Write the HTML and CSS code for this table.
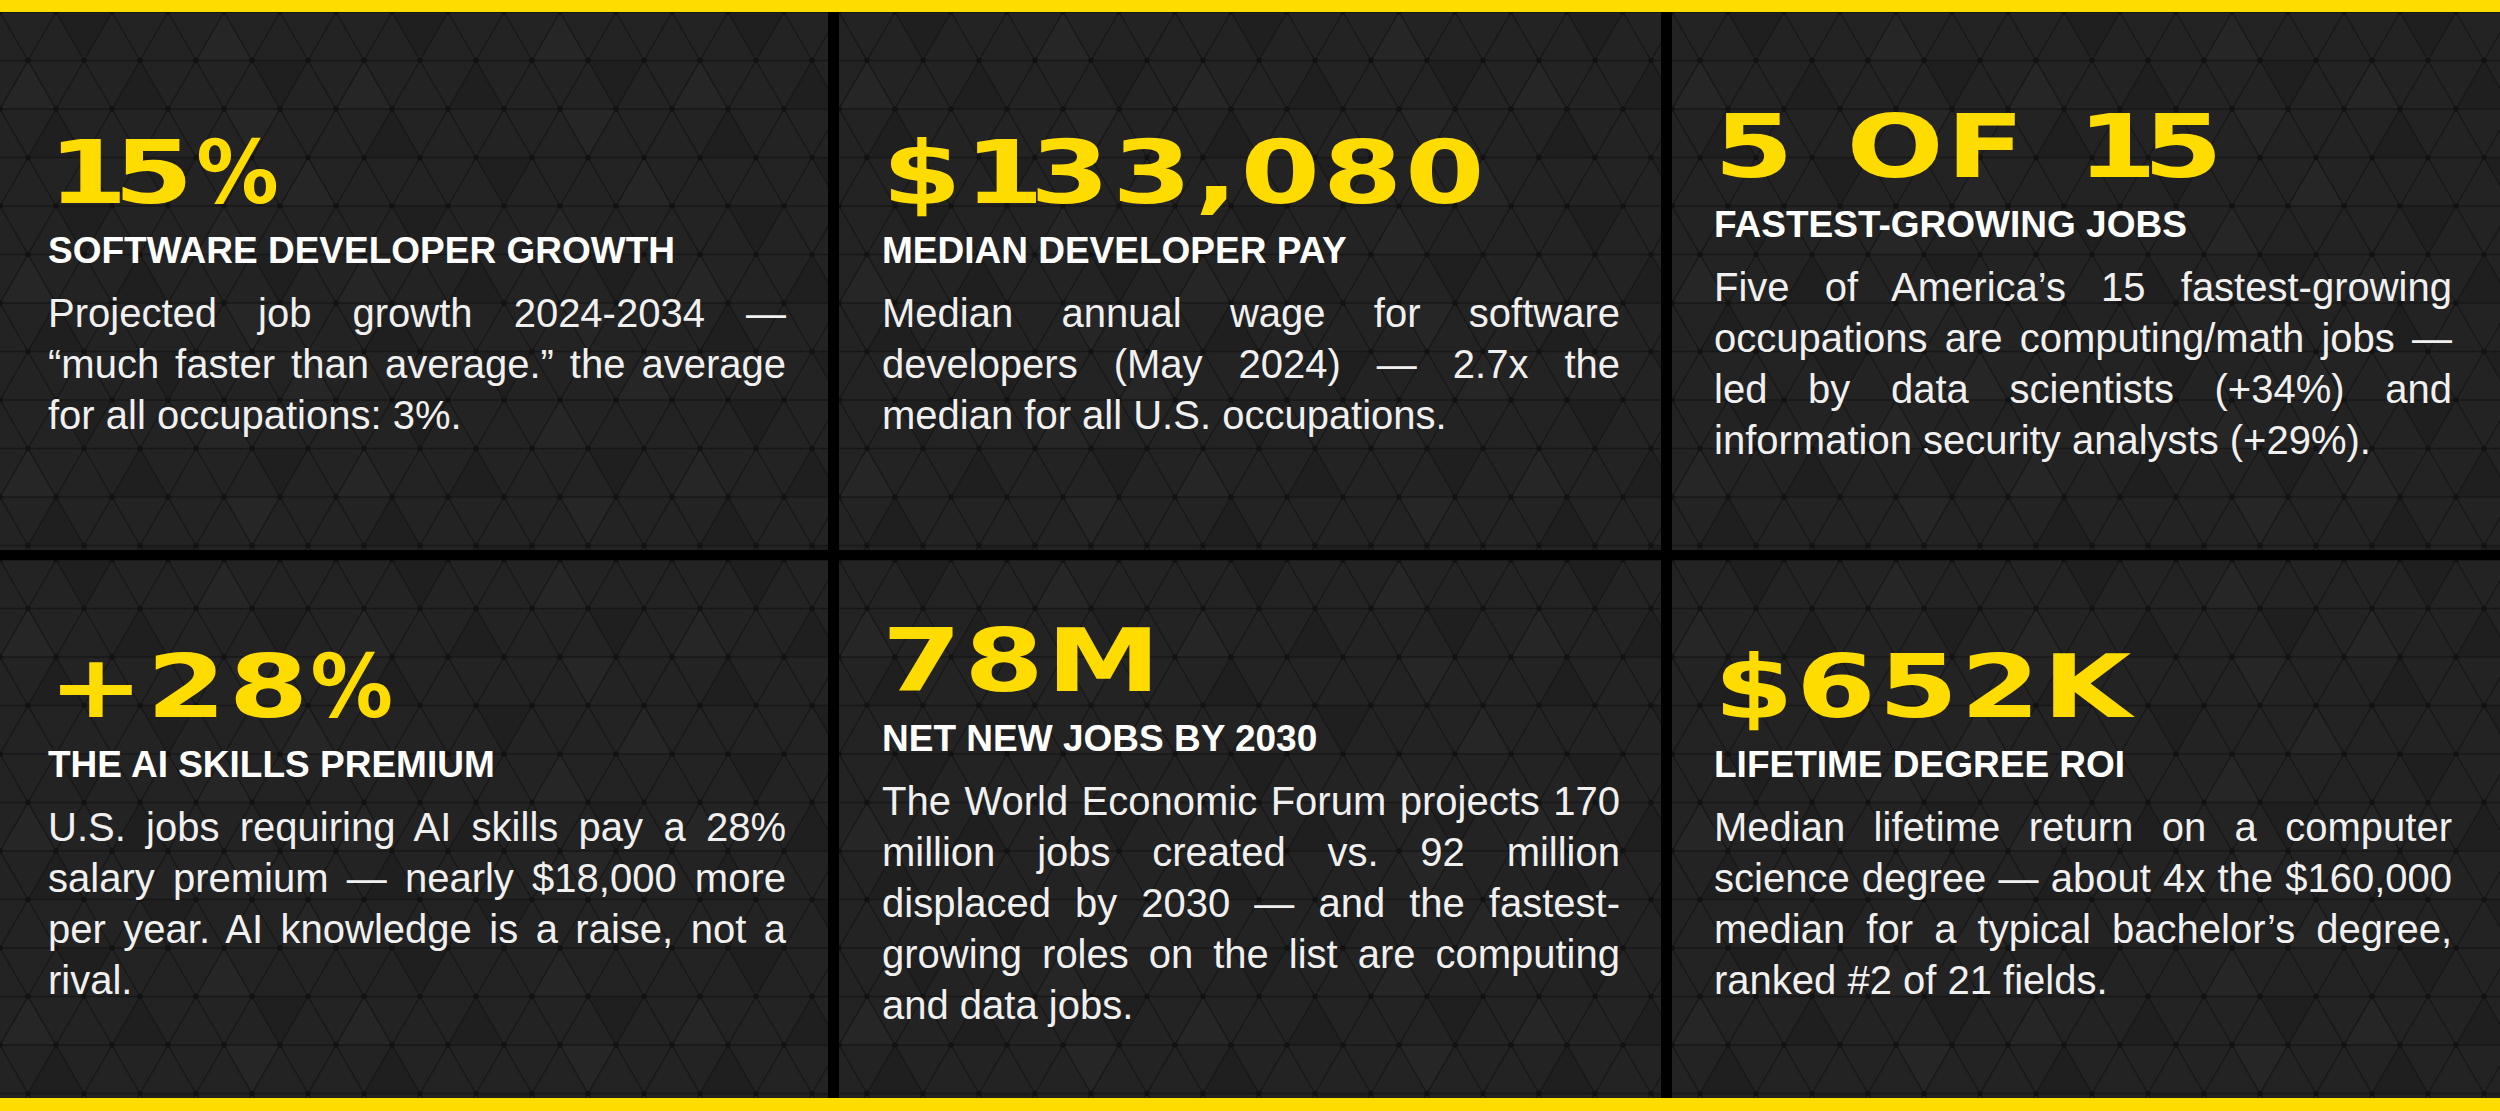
FILE: index.html
```html
<!DOCTYPE html>
<html lang="en">
<head>
<meta charset="utf-8">
<title>Computing Careers by the Numbers</title>
<link rel="stylesheet" href="styles.css">
</head>
<body>
<main class="board">
  <section class="cell c1 r1">
    <div class="num"><span class="one">1</span>5<span class="pct">%</span></div>
    <h2 class="title">SOFTWARE DEVELOPER GROWTH</h2>
    <p class="desc"><span class="ln">Projected job growth 2024-2034 —</span><span class="ln">“much faster than average.” the average</span><span class="ln">for all occupations: 3%.</span></p>
  </section>
  <section class="cell c2 r1">
    <div class="num">$<span class="one">1</span>33,080</div>
    <h2 class="title">MEDIAN DEVELOPER PAY</h2>
    <p class="desc"><span class="ln">Median annual wage for software</span><span class="ln">developers (May 2024) — 2.7x the</span><span class="ln">median for all U.S. occupations.</span></p>
  </section>
  <section class="cell c3 r1">
    <div class="num words">5 OF <span class="one">1</span>5</div>
    <h2 class="title">FASTEST-GROWING JOBS</h2>
    <p class="desc"><span class="ln">Five of America’s 15 fastest-growing</span><span class="ln">occupations are computing/math jobs —</span><span class="ln">led by data scientists (+34%) and</span><span class="ln">information security analysts (+29%).</span></p>
  </section>
  <section class="cell c1 r2">
    <div class="num">+28<span class="pct">%</span></div>
    <h2 class="title">THE AI SKILLS PREMIUM</h2>
    <p class="desc"><span class="ln">U.S. jobs requiring AI skills pay a 28%</span><span class="ln">salary premium — nearly $18,000 more</span><span class="ln">per year. AI knowledge is a raise, not a</span><span class="ln">rival.</span></p>
  </section>
  <section class="cell c2 r2">
    <div class="num">78M</div>
    <h2 class="title">NET NEW JOBS BY 2030</h2>
    <p class="desc"><span class="ln">The World Economic Forum projects 170</span><span class="ln">million jobs created vs. 92 million</span><span class="ln">displaced by 2030 — and the fastest-</span><span class="ln">growing roles on the list are computing</span><span class="ln">and data jobs.</span></p>
  </section>
  <section class="cell c3 r2">
    <div class="num">$652K</div>
    <h2 class="title">LIFETIME DEGREE ROI</h2>
    <p class="desc"><span class="ln">Median lifetime return on a computer</span><span class="ln">science degree — about 4x the $160,000</span><span class="ln">median for a typical bachelor’s degree,</span><span class="ln">ranked #2 of 21 fields.</span></p>
  </section>
</main>
</body>
</html>
```
FILE: styles.css
```css
* { box-sizing: border-box; }

html, body { margin: 0; padding: 0; }

body {
  width: 2500px;
  height: 1111px;
  overflow: hidden;
  background: #000;
  font-family: "Liberation Sans", Arial, sans-serif;
}

.board {
  height: 1111px;
  border-top: 12px solid #ffdc00;
  border-bottom: 13px solid #ffdc00;
  display: grid;
  grid-template-columns: 828px 822px 1fr;
  grid-template-rows: 1fr 1fr;
  column-gap: 11px;
  row-gap: 10px;
  background: #000;
}

.cell {
  display: flex;
  flex-direction: column;
  justify-content: center;
  overflow: hidden;
  background-color: #232323;
  background-image: url("data:image/svg+xml,%3Csvg xmlns='http://www.w3.org/2000/svg' width='336' height='194'%3E%3Crect width='336' height='194' fill='%23232323'/%3E%3Cg fill='%231f1f1f'%3E%3Cpolygon points='56,0 112,0 84,48.5'/%3E%3Cpolygon points='140,48.5 112,97 168,97'/%3E%3Cpolygon points='56,97 28,145.5 84,145.5'/%3E%3Cpolygon points='140,145.5 196,145.5 168,194'/%3E%3Cpolygon points='252,48.5 308,48.5 280,97'/%3E%3C/g%3E%3Cg fill='%23262626'%3E%3Cpolygon points='224,0 196,48.5 252,48.5'/%3E%3Cpolygon points='224,97 280,97 252,145.5'/%3E%3Cpolygon points='28,48.5 0,97 56,97'/%3E%3Cpolygon points='308,145.5 280,194 336,194'/%3E%3C/g%3E%3Cpath fill='none' stroke='%23171717' stroke-width='1.5' d='M0 0H336M0 48.5H336M0 97H336M0 145.5H336M0 194H336M-112 0L0 194M-56 0L56 194M0 0L112 194M56 0L168 194M112 0L224 194M168 0L280 194M224 0L336 194M280 0L392 194M0 0L-112 194M56 0L-56 194M112 0L0 194M168 0L56 194M224 0L112 194M280 0L168 194M336 0L224 194M392 0L280 194M448 0L336 194'/%3E%3Cg fill='%23121212'%3E%3Ccircle cx='0' cy='0' r='2.8'/%3E%3Ccircle cx='56' cy='0' r='2.8'/%3E%3Ccircle cx='112' cy='0' r='2.8'/%3E%3Ccircle cx='168' cy='0' r='2.8'/%3E%3Ccircle cx='224' cy='0' r='2.8'/%3E%3Ccircle cx='280' cy='0' r='2.8'/%3E%3Ccircle cx='336' cy='0' r='2.8'/%3E%3Ccircle cx='0' cy='97' r='2.8'/%3E%3Ccircle cx='56' cy='97' r='2.8'/%3E%3Ccircle cx='112' cy='97' r='2.8'/%3E%3Ccircle cx='168' cy='97' r='2.8'/%3E%3Ccircle cx='224' cy='97' r='2.8'/%3E%3Ccircle cx='280' cy='97' r='2.8'/%3E%3Ccircle cx='336' cy='97' r='2.8'/%3E%3Ccircle cx='0' cy='194' r='2.8'/%3E%3Ccircle cx='56' cy='194' r='2.8'/%3E%3Ccircle cx='112' cy='194' r='2.8'/%3E%3Ccircle cx='168' cy='194' r='2.8'/%3E%3Ccircle cx='224' cy='194' r='2.8'/%3E%3Ccircle cx='280' cy='194' r='2.8'/%3E%3Ccircle cx='336' cy='194' r='2.8'/%3E%3Ccircle cx='28' cy='48.5' r='2.8'/%3E%3Ccircle cx='84' cy='48.5' r='2.8'/%3E%3Ccircle cx='140' cy='48.5' r='2.8'/%3E%3Ccircle cx='196' cy='48.5' r='2.8'/%3E%3Ccircle cx='252' cy='48.5' r='2.8'/%3E%3Ccircle cx='308' cy='48.5' r='2.8'/%3E%3Ccircle cx='28' cy='145.5' r='2.8'/%3E%3Ccircle cx='84' cy='145.5' r='2.8'/%3E%3Ccircle cx='140' cy='145.5' r='2.8'/%3E%3Ccircle cx='196' cy='145.5' r='2.8'/%3E%3Ccircle cx='252' cy='145.5' r='2.8'/%3E%3Ccircle cx='308' cy='145.5' r='2.8'/%3E%3C/g%3E%3C/svg%3E");
}

.r1 { padding-top: 7px; }
.r2 { padding-bottom: 10px; }

.c1 { padding-left: 48px; }
.c2 { padding-left: 43px; }
.c3 { padding-left: 42px; }

.num {
  height: 88px;
  margin: 0;
  font-family: "DejaVu Sans", Verdana, sans-serif;
  font-weight: bold;
  font-size: 88px;
  line-height: 88px;
  letter-spacing: 2px;
  color: #ffdc00;
  white-space: nowrap;
  transform: scaleX(1.3);
  transform-origin: 0 50%;
}

.num .one { letter-spacing: -0.12em; }

.num .pct {
  display: inline-block;
  transform: scaleX(0.72);
  transform-origin: 0 50%;
}

.num.words { word-spacing: 6px; }

.title {
  width: 738px;
  margin: 12px 0 0;
  font-family: "Liberation Sans", Arial, sans-serif;
  font-weight: bold;
  font-size: 37px;
  line-height: 44px;
  color: #ffffff;
  white-space: nowrap;
}

.desc {
  width: 738px;
  margin: 15px 0 0;
  font-family: "Liberation Sans", Arial, sans-serif;
  font-size: 40px;
  line-height: 51px;
  color: #f0f0f0;
}

.ln {
  display: block;
  text-align: justify;
  text-align-last: justify;
}

.ln:last-child { text-align-last: left; }
```
